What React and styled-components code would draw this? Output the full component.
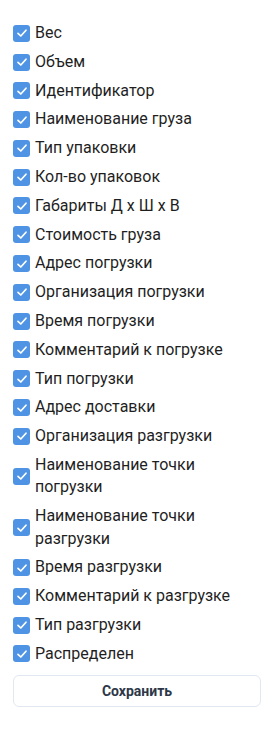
import React, { useState } from "react";
import styled, { createGlobalStyle } from "styled-components";

const Global = createGlobalStyle`
  html, body { margin: 0; padding: 0; background: #fff; }
  body { font-family: Roboto, "Noto Sans", Arial, sans-serif; }
`;

const Panel = styled.div`
  width: 276px;
  box-sizing: border-box;
  padding: 22px 15px 20px 13px;
  display: flex;
  flex-direction: column;
`;

const List = styled.div`
  display: flex;
  flex-direction: column;
  gap: 6.4px;
`;

const Row = styled.label`
  display: flex;
  align-items: center;
  gap: 5px;
  cursor: pointer;
`;

const Box = styled.span`
  flex: 0 0 17px;
  width: 17px;
  height: 17px;
  border-radius: 3px;
  background: ${(p) => (p.$checked ? "#4f94e4" : "#fff")};
  border: ${(p) => (p.$checked ? "none" : "1px solid #a0aec0")};
  box-sizing: border-box;
  display: flex;
  align-items: center;
  justify-content: center;
`;

const Label = styled.span`
  font-size: 16px;
  line-height: 22.4px;
  color: #1f1f1f;
`;

const SaveButton = styled.button`
  margin-top: 10px;
  height: 32px;
  width: 100%;
  border: 1px solid #e2e8f0;
  border-radius: 6px;
  background: #fff;
  font-family: Roboto, Arial, sans-serif;
  font-weight: 700;
  font-size: 14px;
  color: #2d3748;
  cursor: pointer;
`;

const items = [
  "Вес",
  "Объем",
  "Идентификатор",
  "Наименование груза",
  "Тип упаковки",
  "Кол-во упаковок",
  "Габариты Д х Ш х В",
  "Стоимость груза",
  "Адрес погрузки",
  "Организация погрузки",
  "Время погрузки",
  "Комментарий к погрузке",
  "Тип погрузки",
  "Адрес доставки",
  "Организация разгрузки",
  "Наименование точки погрузки",
  "Наименование точки разгрузки",
  "Время разгрузки",
  "Комментарий к разгрузке",
  "Тип разгрузки",
  "Распределен",
];

const Check = () => (
  <svg width="12" height="12" viewBox="0 0 12 12" fill="none">
    <path d="M2 6.3 L4.8 9 L10 3.2" stroke="#fff" strokeWidth="1.7" strokeLinecap="round" strokeLinejoin="round" />
  </svg>
);

export default function App() {
  const [checked, setChecked] = useState(() => items.map(() => true));
  const toggle = (i) => setChecked((c) => c.map((v, j) => (j === i ? !v : v)));
  return (
    <>
      <Global />
      <Panel>
        <List>
          {items.map((t, i) => (
            <Row key={t} onClick={() => toggle(i)}>
              <Box $checked={checked[i]}>{checked[i] && <Check />}</Box>
              <Label>{t}</Label>
            </Row>
          ))}
        </List>
        <SaveButton>Сохранить</SaveButton>
      </Panel>
    </>
  );
}
